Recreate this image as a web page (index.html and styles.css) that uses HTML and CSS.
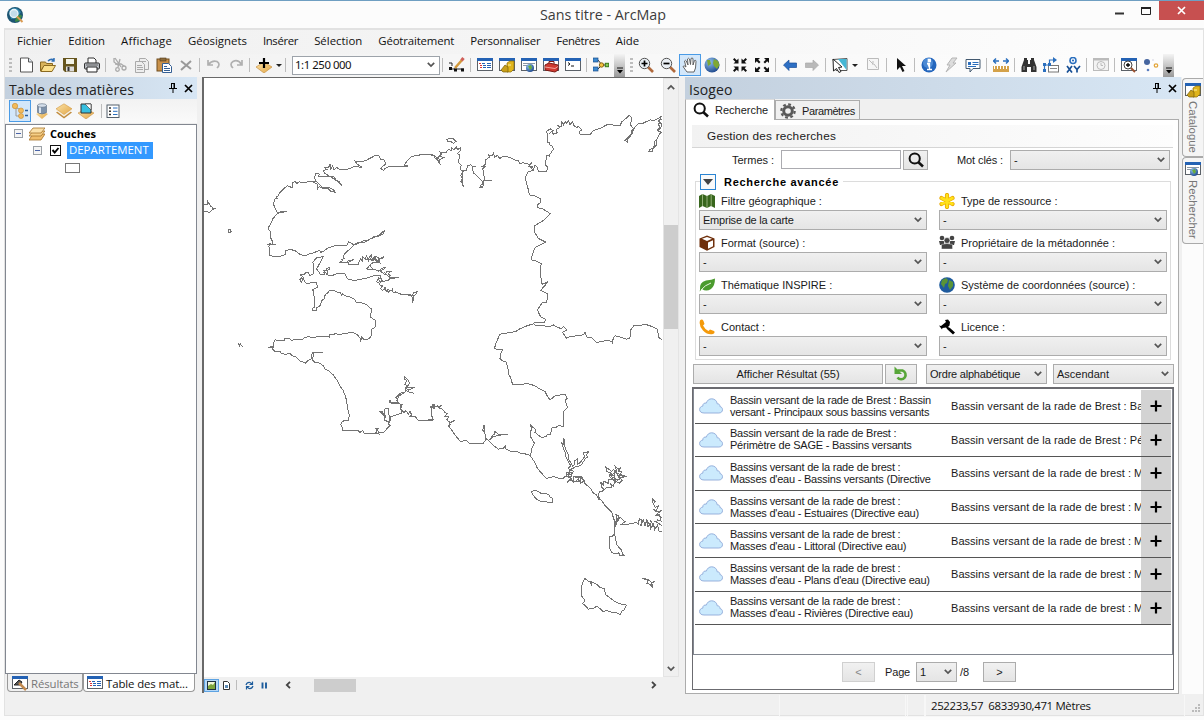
FILE: index.html
```html
<!DOCTYPE html>
<html lang="fr">
<head>
<meta charset="utf-8">
<title>Sans titre - ArcMap</title>
<link rel="stylesheet" href="styles.css">
</head>
<body>
<svg class="defs" width="0" height="0">
  <defs>
    <linearGradient id="gLayer" x1="0" y1="0" x2="1" y2="1"><stop offset="0" stop-color="#fbe3a8"/><stop offset="1" stop-color="#e2a646"/></linearGradient>
    <radialGradient id="gGlobe" cx=".35" cy=".3" r=".8"><stop offset="0" stop-color="#8fc0ee"/><stop offset="1" stop-color="#153f85"/></radialGradient>
  </defs>
  <symbol id="i-win" viewBox="0 0 16 16"><rect x=".5" y="1.5" width="15" height="12" fill="#fff" stroke="#5b6168"/><rect x="0" y="1" width="16" height="3" fill="#2462b4"/></symbol>
  <symbol id="i-toc" viewBox="0 0 16 16"><use href="#i-win"/><path d="M2 6.5h2M3 8.5h2M3 10.5h2" stroke="#d33"/><path d="M5 6.5h3M10 6.5h4M6 8.5h3M10 8.5h4M6 10.5h3M10 10.5h4" stroke="#2462b4"/></symbol>
  <symbol id="i-cat" viewBox="0 0 16 16"><use href="#i-win"/><path d="M8 6l3-2h4v8l-3 3H8z" fill="#e0b51c" stroke="#8a6a06" stroke-width=".7"/><path d="M2 13l4-5 3 2v5H4z" fill="#c9a01a" stroke="#7a5e08" stroke-width=".7"/><path d="M9 8h3" stroke="#fff3a0"/></symbol>
  <symbol id="i-search" viewBox="0 0 16 16"><use href="#i-win"/><path d="M2 6.500h12M2 8.500h5" stroke="#8a97a5"/><circle cx="9" cy="11" r="4" fill="url(#gGlobe)"/><path d="M7 9l3-1 1 3-2 2z" fill="#69ac3c"/></symbol>
  <symbol id="i-plus" viewBox="0 0 14 14"><path d="M7 1.500v11M1.500 7h11" stroke="#000" stroke-width="2.200"/></symbol>
  <symbol id="i-cloud" viewBox="0 0 24 16"><path d="M5 15C2 15 .6 13.400.6 11.500C.6 9.500 2 8.300 3.800 8.100C3.600 5.800 5.500 4.600 7.300 5.100C8.200 2.300 10.200.8 12.700.8C15.800.8 18 3 18.200 5.800C20.100 5.600 21 7 20.900 8.500C22.600 8.900 23.500 10.100 23.500 11.700C23.500 13.700 22 15 19.800 15Z" fill="#cbeafd" stroke="#8fa9d8" stroke-width=".9"/></symbol>
  <symbol id="i-loupe" viewBox="0 0 16 16"><circle cx="6.700" cy="6.500" r="5.100" fill="none" stroke="#111" stroke-width="2"/><path d="M10.400 10.300l4.600 4.200" stroke="#111" stroke-width="2.600"/></symbol>
  <symbol id="i-chev" viewBox="0 0 8 6"><path d="M.8 .8L4 4l3.200-3.200" fill="none" stroke="#555" stroke-width="1.700"/></symbol>
  <symbol id="i-pin" viewBox="0 0 8 10"><path d="M2 .5h4M2.500 0v5.500M5.500 0v5.500M0 5.500h8M4 6v4" stroke="#000" stroke-width="1" fill="none"/><path d="M5 .5v5" stroke="#000"/></symbol>
  <symbol id="i-x" viewBox="0 0 9 9"><path d="M1 1l7 7M8 1l-7 7" stroke="#000" stroke-width="1.700"/></symbol>
  <symbol id="i-layer" viewBox="0 0 16 16"><path d="M8 4.500l8 5-8 6-8-6z" fill="#c08a3c"/><path d="M8 2.800l8 5-8 6-8-6z" fill="#f5efe2"/><path d="M8 .8l8 5-8 5.700-8-5.700z" fill="url(#gLayer)" stroke="#d39a45" stroke-width=".6"/></symbol>
</svg>

<header class="titlebar">
  <svg class="applogo" viewBox="0 0 17 17"><circle cx="8" cy="8" r="8" fill="#1d5572"/><path d="M2 4q4-5 9-2l3 3-4 6-6 1z" fill="#2f86ad"/><path d="M9 10q4-4 6-1l-3 5-4 1z" fill="#3c8b45"/><circle cx="7" cy="6.500" r="4" fill="#c3dce9" stroke="#eaf3f8" stroke-width="1.300"/><path d="M10 9.500l5.500 5.500" stroke="#d99a52" stroke-width="2"/></svg>
  <span class="wintitle">Sans titre - ArcMap</span>
  <span class="winbtns">
    <svg class="wmin" viewBox="0 0 9 3"><path d="M0 1.500h9" stroke="#333" stroke-width="2"/></svg>
    <svg class="wmax" viewBox="0 0 10 8"><path d="M.5 1.500v6h9v-6" fill="none" stroke="#222"/><path d="M0 1h10" stroke="#222" stroke-width="2"/></svg>
    <span class="wclose"><svg viewBox="0 0 9 9"><path d="M1 1l7 7M8 1l-7 7" stroke="#fff" stroke-width="1.700"/></svg></span>
  </span>
</header>

<div class="app">
<nav class="menubar"><span>Fichier</span><span>Edition</span><span>Affichage</span><span>Géosignets</span><span>Insérer</span><span>Sélection</span><span>Géotraitement</span><span>Personnaliser</span><span>Fenêtres</span><span>Aide</span></nav>

<div class="toolbar">
  <i class="grip"></i>
  <b><svg viewBox="0 0 16 16"><path d="M2.500 1h8l4 4v10h-12z" fill="#fff" stroke="#555"/><path d="M10.500 1v4h4" fill="#dfe7ef" stroke="#555"/></svg></b>
  <b><svg viewBox="0 0 16 16"><path d="M.5 5h5l1 1.500h6V9H4L.5 14z" fill="#d9b45c" stroke="#8b6a20"/><path d="M.8 14.500L4 8.500h11.500L12 14.500z" fill="#fbe08c" stroke="#8b6a20"/><path d="M8 4q3-3 6-1v-2M11.500 4h3" fill="none" stroke="#2f6fb5" stroke-width="1.500"/></svg></b>
  <b><svg viewBox="0 0 16 16"><path d="M1 1h14v14H3l-2-2z" fill="#66551e"/><rect x="4" y="2" width="8" height="5" fill="#f2f2e6"/><rect x="4" y="9.500" width="8" height="5" fill="#ddd"/><path d="M6.500 10v4" stroke="#333" stroke-width="2"/></svg></b>
  <b><svg viewBox="0 0 16 16"><path d="M4 6V1h6l2 2v3" fill="#fff" stroke="#333"/><rect x=".6" y="6" width="14.800" height="6" rx="1" fill="#c8ccd2" stroke="#222"/><path d="M3 10h10v5H3z" fill="#fff" stroke="#222"/><path d="M2 8h12" stroke="#555"/></svg></b>
  <i class="sep"></i>
  <b><svg viewBox="0 0 16 16" fill="none" stroke="#aaa" stroke-width="1.300"><path d="M3 1l6 9M8 2L6 10M2 1v4l4 3"/><circle cx="5.500" cy="12.500" r="1.800"/><circle cx="12" cy="11" r="2"/><path d="M3 7h6l3 2"/></svg></b>
  <b><svg viewBox="0 0 16 16" fill="#eee" stroke="#aaa"><path d="M5.500 1.500h6l3 3v8h-9z"/><path d="M1.500 4.500h6l3 3v8h-9z"/><path d="M3 8.500h5M3 10.500h6M3 12.500h6M7 4.500h5"/></svg></b>
  <b><svg viewBox="0 0 16 16"><rect x="1" y="2" width="12" height="12" fill="#c9914a" stroke="#6f4c1e"/><rect x="4" y="1" width="6" height="3" fill="#8b6b3d" stroke="#553b14" stroke-width=".6"/><path d="M6.500 6.500h6l3 3v6h-9z" fill="#fff" stroke="#345f94"/><path d="M8 9.500h3M8 11.500h6M8 13.500h6" stroke="#345f94"/></svg></b>
  <b><svg viewBox="0 0 16 16"><path d="M3 4l10 8M13 4L3 13" stroke="#999" stroke-width="2"/></svg></b>
  <i class="sep"></i>
  <b><svg viewBox="0 0 16 16"><path d="M2 3v5h5M2.500 7.500Q6 3 11 4.500Q15 7 11 11" fill="none" stroke="#b0b0b0" stroke-width="1.700"/></svg></b>
  <b><svg viewBox="0 0 16 16"><path d="M14 3v5H9M13.500 7.500Q10 2 5 4.500Q1 7 5 11" fill="none" stroke="#b0b0b0" stroke-width="1.700"/></svg></b>
  <i class="sep"></i>
  <b><svg viewBox="0 0 16 16"><path d="M8 5l8 5-8 6-8-6z" fill="url(#gLayer)" stroke="#c99243" stroke-width=".7"/><path d="M8 1v10M3 6h10" stroke="#000" stroke-width="2.200"/></svg></b>
  <i class="caret"></i>
  <i class="sep wide"></i>
  <span class="scale">1:1 250 000<svg><use href="#i-chev"/></svg></span>
  <i class="sep"></i>
  <b><svg viewBox="0 0 16 16"><path d="M0 6h3v3M3 12h12" stroke="#222" fill="none"/><path d="M0 10h3v3H0zM5 11.500h3v3H5zM12 11.500h3v3h-3z" fill="#111"/><path d="M6 11l7-8" stroke="#d39a3c" stroke-width="2.500"/><path d="M12.500 3.500l2-2.500" stroke="#d0605a" stroke-width="3"/></svg></b>
  <i class="sep"></i>
  <b><svg><use href="#i-toc"/></svg></b>
  <b><svg><use href="#i-cat"/></svg></b>
  <b><svg><use href="#i-search"/></svg></b>
  <b><svg viewBox="0 0 16 16"><use href="#i-win"/><path d="M2 8l4-2 9 2v5l-3 2-10-2z" fill="#cf3b31" stroke="#7c1a14"/><path d="M6 6V4.500h5V7" fill="none" stroke="#7c1a14"/><path d="M2 10l10 1.500 3-2" stroke="#f3a29b" fill="none"/></svg></b>
  <b><svg viewBox="0 0 16 16"><use href="#i-win"/><path d="M3 5.500l2 1.500-2 1.500M6 9h3" stroke="#111" fill="none"/></svg></b>
  <i class="sep"></i>
  <b><svg viewBox="0 0 16 16"><path d="M5 3l4 5M5 12l4-4h4" stroke="#333" fill="none"/><rect x="0" y="1" width="5" height="4" fill="#3b88cf" stroke="#1b4f8a" stroke-width=".7"/><rect x="0" y="10" width="5" height="4" fill="#3b88cf" stroke="#1b4f8a" stroke-width=".7"/><circle cx="8.500" cy="8" r="2.200" fill="#f3c13e" stroke="#8a6513"/><rect x="12.300" y="6.300" width="3.400" height="3.400" fill="#8cca57" stroke="#3a7a1a"/></svg></b>
  <i class="overflow left"><svg viewBox="0 0 6 7"><path d="M0 1h6" stroke="#111"/><path d="M0 3h6L3 6.500z"/></svg></i>
  <i class="grip second"></i>
  <b><svg viewBox="0 0 16 16"><path d="M10 10l5 5" stroke="#b0693c" stroke-width="2.600"/><circle cx="6.500" cy="6.500" r="5.200" fill="#e9eef3" stroke="#555"/><path d="M6.500 3.500v6M3.500 6.500h6" stroke="#000" stroke-width="1.700"/></svg></b>
  <b><svg viewBox="0 0 16 16"><path d="M10 10l5 5" stroke="#b0693c" stroke-width="2.600"/><circle cx="6.500" cy="6.500" r="5.200" fill="#e9eef3" stroke="#555"/><path d="M3.500 6.500h6" stroke="#000" stroke-width="1.700"/></svg></b>
  <b class="on"><svg viewBox="0 0 16 16"><path d="M5 15L1 9.500q1-1.500 3 .5L2.500 4q.8-1.500 1.800 0l1.700 4L5.500 2q1-1.500 2 0L8.500 7.500 9 1.500q1-1 2 0V8l1.500-4.500q1.500-.8 1.500 1L13.500 11 12 15z" fill="#fff" stroke="#555" stroke-width=".9"/></svg></b>
  <b><svg viewBox="0 0 16 16"><circle cx="8" cy="8" r="7.500" fill="url(#gGlobe)"/><path d="M10 2l4 2 1.500 4-2.500 4-3-3-1-3zM3 3l3 0 1 4-3 2z" fill="#7fa834"/></svg></b>
  <i class="sep"></i>
  <b><svg viewBox="0 0 16 16" fill="#111"><path d="M6.500 1.500v5h-5L3.300 4.700 1 2.400 2.400 1l2.300 2.300zM9.500 1.500v5h5l-1.800-1.800L15 2.400 13.600 1l-2.300 2.300zM6.500 14.500v-5h-5l1.800 1.800L1 13.600 2.400 15l2.300-2.300zM9.500 14.500v-5h5l-1.800 1.800L15 13.600 13.600 15l-2.300-2.300z"/></svg></b>
  <b><svg viewBox="0 0 16 16" fill="#111"><path d="M1 1h5L4.200 2.800 6.500 5 5 6.500 2.800 4.200 1 6zM15 1h-5l1.800 1.800L9.500 5 11 6.500l2.200-2.300L15 6zM1 15h5l-1.800-1.800L6.500 11 5 9.500l-2.200 2.300L1 10zM15 15h-5l1.800-1.800L9.500 11 11 9.500l2.200 2.300L15 10z"/></svg></b>
  <i class="sep"></i>
  <b><svg viewBox="0 0 16 16"><path d="M1.500 8L7 3v3h7.500v4.500H7v3z" fill="#2d6fc4" stroke="#1b4f98" stroke-width=".7"/></svg></b>
  <b><svg viewBox="0 0 16 16"><path d="M14.500 8L9 3v3H1.500v4.500H9v3z" fill="#b9b9b9" stroke="#a9a9a9" stroke-width=".7"/></svg></b>
  <i class="sep"></i>
  <b><svg viewBox="0 0 16 16"><path d="M1 2.500l14-1v12H4z" fill="#fff" stroke="#555"/><path d="M6 2l8.500 0v11z" fill="#46b7d5"/><path d="M1 2l9 8-3.500.5 2.500 4-2 1-2.500-4L1.500 14z" fill="#fff" stroke="#222"/></svg></b>
  <i class="caret"></i>
  <b class="gap"><svg viewBox="0 0 16 16"><path d="M2.500 1.500h11v11h-11z" fill="#f6f6f6" stroke="#bbb"/><path d="M4 3l4 4M8 4v4M9 7l3 4" stroke="#bbb"/></svg></b>
  <i class="sep"></i>
  <b><svg viewBox="0 0 16 16"><path d="M4 1v12l3-3 2.500 5 2-1L9 9h4z" fill="#111"/></svg></b>
  <i class="sep"></i>
  <b><svg viewBox="0 0 16 16"><circle cx="8" cy="8" r="7.500" fill="#2466bd"/><circle cx="7" cy="6" r="5" fill="#4c8ad4"/><path d="M6 6.500h2.500v5.500M6 12.500h5M7.300 2.500h2v2h-2z" stroke="#fff" stroke-width="1.300" fill="#fff"/></svg></b>
  <b><svg viewBox="0 0 16 16"><path d="M9 1h5l-4 5h3L3 15l4-7H4z" fill="#ddd" stroke="#b5b5b5"/></svg></b>
  <b><svg viewBox="0 0 16 16"><path d="M1 2.500h14v9H8l-3 3.500v-3.500H1z" fill="#fff" stroke="#43596f"/><path d="M3 5h3v3H3z" fill="#2b6fbe"/><path d="M7.500 5.500h6M7.500 7.500h6M3 9.500h8" stroke="#2b6fbe"/></svg></b>
  <i class="sep"></i>
  <b><svg viewBox="0 0 16 16"><path d="M0 4h6M10 4h6M3 1.500L.5 4 3 6.500M13 1.500L15.500 4 13 6.500" stroke="#2b6fbe" fill="none" stroke-width="1.500"/><rect x="0" y="9" width="16" height="6" fill="#d4a24a"/><path d="M1.500 9v3M4.500 9v3M7.500 9v3M10.500 9v3M13.500 9v3" stroke="#fff"/></svg></b>
  <i class="sep"></i>
  <b><svg viewBox="0 0 16 16" fill="#333"><path d="M3 1h3v2h1v4h2V3h1V1h3v2l2.500 7v5H10v-5H6v5H.5v-5L3 3z"/><path d="M3 9v4M13 9v4" stroke="#aaa"/></svg></b>
  <b><svg viewBox="0 0 16 16"><path d="M1.500 13V8h5V3h5" stroke="#2b6fbe" fill="none" stroke-width="1.200"/><path d="M10 0l4 3-4 3z" fill="#2b6fbe"/><rect x="5.500" y="8.500" width="10" height="6.500" fill="#fff" stroke="#777"/><path d="M0 12h3v3H0zM0 6h3v3H0zM5 6h3v3H5z" fill="#2b6fbe"/><path d="M7 11.500h7" stroke="#888"/></svg></b>
  <b><svg viewBox="0 0 16 16"><circle cx="8" cy="3.500" r="3" fill="#fff" stroke="#2b6fbe" stroke-width="1.600"/><circle cx="8" cy="3.500" r="1.100" fill="#2b6fbe"/><path d="M2 9l5 6.500M7 9l-5 6.500M9 9l3 3.500 3-3.500M12 12v3.500" stroke="#174f94" fill="none" stroke-width="1.700"/></svg></b>
  <i class="sep"></i>
  <b><svg viewBox="0 0 16 16" fill="#f3f3f3" stroke="#bbb"><rect x=".5" y="1.500" width="15" height="12"/><path d="M0 2.500h16" stroke-width="2"/><circle cx="8" cy="8.500" r="4"/><path d="M8 6v2.500h2"/></svg></b>
  <i class="sep"></i>
  <b><svg viewBox="0 0 16 16"><use href="#i-win"/><circle cx="7" cy="8" r="4" fill="#fff" stroke="#444"/><path d="M7 6v4M5 8h4" stroke="#000" stroke-width="1.300"/><path d="M10 11l4 4" stroke="#9c5230" stroke-width="2"/></svg></b>
  <b><svg viewBox="0 0 16 16"><circle cx="4" cy="5" r="3" fill="#46659f"/><circle cx="13" cy="8.500" r="1.700" fill="#fff" stroke="#e3a63c" stroke-width="1.300"/><circle cx="5" cy="13" r="1.300" fill="#5a7dc0"/><circle cx="10" cy="3" r=".8" fill="#ccd"/></svg></b>
  <i class="overflow"><svg viewBox="0 0 6 7"><path d="M0 1h6" stroke="#111"/><path d="M0 3h6L3 6.500z"/></svg></i>
</div>

<main class="work">
  <section class="toc">
    <div class="phead"><span>Table des matières</span><svg class="pin"><use href="#i-pin"/></svg><svg class="px"><use href="#i-x"/></svg></div>
    <div class="tocbar">
      <b class="on"><svg viewBox="0 0 16 16"><path d="M3 4l6 3M4 4v9h5" stroke="#999" fill="none"/><circle cx="3" cy="3" r="2.700" fill="#f2ba5c" stroke="#c68a2c" stroke-width=".6"/><circle cx="9" cy="7.500" r="2.500" fill="#f2ba5c" stroke="#c68a2c" stroke-width=".6"/><circle cx="9" cy="13" r="2.500" fill="#f2ba5c" stroke="#c68a2c" stroke-width=".6"/><path d="M13 7.500h3M13 12.500h3" stroke="#2b5f9e" stroke-width="1.500"/></svg></b>
      <b><svg viewBox="0 0 16 16"><path d="M8 8l6 3-6 5-6-5z" fill="url(#gLayer)"/><path d="M3.500 2.500v7q4.500 3 9 0v-7z" fill="#7e92ab" stroke="#5b6b80" stroke-width=".6"/><path d="M6 3v7" stroke="#dbe5f0" stroke-width="2"/><ellipse cx="8" cy="2.500" rx="4.500" ry="1.800" fill="#d5dfeb" stroke="#5b6b80" stroke-width=".6"/></svg></b>
      <b><svg><use href="#i-layer"/></svg></b>
      <b><svg viewBox="0 0 16 16"><path d="M8 6l8 4-8 6-8-6z" fill="url(#gLayer)" stroke="#c99243" stroke-width=".6"/><path d="M3 1h10v9H3z" fill="#37bfe0" stroke="#333"/><path d="M7 1h6v6z" fill="#fff" stroke="#333" stroke-width=".6"/></svg></b>
      <i class="sep"></i>
      <b><svg viewBox="0 0 16 16"><rect x="2" y="2" width="12" height="12.500" fill="#fff" stroke="#55606c"/><path d="M4 5h2M4 8.300h2M4 11.500h2" stroke="#333" stroke-width="1.600"/><path d="M8 5h4.500M8 8.300h4.500M8 11.500h4.500" stroke="#2b6fbe"/></svg></b>
    </div>
    <div class="tree">
      <div class="node l1"><i class="exp"></i><svg viewBox="0 0 16 14"><path d="M4 7h12l-4 6H0z" fill="#efbd6b" stroke="#a7742b" stroke-width=".8"/><path d="M4 4h12l-4 5H0z" fill="#f6cf86" stroke="#a7742b" stroke-width=".8"/><path d="M4 1h12l-4 5H0z" fill="#fbe1a9" stroke="#a7742b" stroke-width=".8"/></svg><strong>Couches</strong></div>
      <div class="node l2"><i class="exp"></i><svg viewBox="0 0 11 11"><rect x=".5" y=".5" width="10" height="10" fill="#fff" stroke="#111"/><path d="M2.500 5l2.200 2.500L8.500 3" fill="none" stroke="#000" stroke-width="1.900"/></svg><span class="sel">DEPARTEMENT</span></div>
      <div class="swatch"></div>
    </div>
    <div class="doctabs">
      <span class="dtab"><svg viewBox="0 0 16 16"><use href="#i-win"/><path d="M2 10l5-5 3 2-2 3z" fill="#555" stroke="#222"/><path d="M7 8l7 7" stroke="#c28a50" stroke-width="2.500"/></svg><em>Résultats</em></span><span class="dtab act"><svg><use href="#i-toc"/></svg><em>Table des mat...</em></span>
    </div>
  </section>

  <section class="mapwin">
    <div class="maparea">
      <svg class="map" viewBox="204 79 459 599" shape-rendering="crispEdges">
        <g transform="translate(200 110) scale(.33333)">
          <path d="M720 160L712 152 715 146 705 148 700 138 672 135 650 140 635 142 622 155 612 168 625 171 600 172 570 171 555 178 551 185 542 178 548 172 558 165 552 152 541 150 538 141 525 140 500 153 488 157 465 156 470 164 487 176 465 171 455 176 440 182 418 181 410 175 402 182 398 170 392 180 390 165 386 175 374 176 381 182 370 184 374 193 395 205 400 202 410 215 426 230 418 218 405 213 392 202 370 203 355 202 358 195 348 192 344 203 346 215 340 220 352 226 352 240 358 232 370 240 385 240 393 247 406 250 400 242 388 236 366 234 350 218 330 216 312 222 303 220 298 218 290 224 285 216 278 222 276 236 262 230 250 240 238 252 234 262 228 262 232 268 225 270 220 285 226 298 232 310 260 307 232 313 218 330 212 345 204 357 213 372 211 385 219 400 215 408 228 408 200 408 211 403 207 412 208 440 222 442 245 441 257 436 257 425 270 421 285 425 300 436 315 441 330 434 340 432 358 424 362 430 370 427 385 416 410 409 430 410 440 409 446 398 462 408 475 400 490 402 510 390 525 384 540 376 556 362 548 376 535 382 520 384 505 394 490 396 470 405 462 408 450 420 440 428 430 440 432 448 426 452 428 455 418 461 440 462 444 456 448 454 462 452 449 458 445 460 446 466 475 467 478 455 482 450 487 456 488 444 495 450 500 440 505 455 508 445 515 437 512 452 520 455 528 443 540 449 553 443 545 450 535 448 535 455 540 462 520 460 508 470 505 475 500 480 512 482 525 482 535 487 545 478 558 475 550 482 540 485 555 497 560 488 577 487 568 490 565 495 570 500 568 507 598 506 570 508 565 514 555 516 540 517 535 510 530 518 538 522 540 528 548 530 542 538 548 545 555 535 558 545 565 550 563 542 575 546 577 540 580 552 592 551 605 557 618 555 635 562 640 552 652 548 648 556 642 560 642 570 637 582 638 565"/>
          <path d="M495 452h20l8-8 6 14 10-10-3 12M515 460h22l-8-8M510 470l10 12M552 490l14 12M535 505l12 8-10 14M550 540l20 8M585 548l25 10M625 556l20 5"/>
          <path d="M545 517L542 500 525 499 500 507 463 515 443 510 435 495 412 494 395 500 380 497 384 488 378 480 388 475 390 482 372 485 378 492 370 490 375 495 362 497 350 480 358 465 370 443 350 446 338 460 342 470 340 495 330 500 326 492 318 490 312 498 300 497 308 502 300 512 304 520 310 506 314 518 320 523 350 520 352 535 335 543 342 546 342 560 343 595 337 598 339 605 350 603 350 596 360 590 365 575 372 570 376 556 385 552 383 550 390 544 400 543 410 549 420 550 425 560 427 554 435 560 450 564 465 572 470 582 485 582 500 587 514 600 512 625 526 634 525 655 516 660 516 672 512 685 500 693 490 690 485 685 482 698 480 688 477 683 470 676 458 670 425 675 418 678 405 673 400 678 388 678 388 684 370 682 355 682 340 687 325 683 312 686 310 690 285 691 275 695 270 690 255 688 252 696 240 696 225 692 220 705 222 714 204 716 218 712 218 720 225 728 240 728 245 734 258 736 270 733 276 740 290 745 300 756 316 762 324 754 334 750 334 742 337 730 350 730 370 730 340 732 340 740 337 752 345 760 358 762 370 770 375 780 385 785 400 798 412 815 418 828 430 845 436 862 440 875 442 895 448 920 445 935 432 935 425 940 422 947 427 957 427 964 475 965 480 970 488 964 492 973 535 975 528 970 532 962 528 958 535 958 533 965 538 972 552 970 560 960 570 950 565 945 572 930 566 915 566 900 556 898 552 912 558 925 550 918 548 908 540 907 552 920 555 935 568 938 570 925 575 922 605 912 606 905 600 895 608 886 590 884 575 884 570 874 568 880 575 882 592 880 592 870 588 866 600 853 612 850 618 848 615 838 624 830 614 826 620 815 614 810 614 803 626 815 628 822 622 835 628 835 640 836 630 842 622 840 628 850 643 853 630 850 620 845 605 856 598 860 590 875 600 884 605 893 600 900 612 910 618 905 625 915 630 906 635 918 630 922 645 922 655 934 698 934 696 925 696 900 691 892 700 894 705 884 703 895 712 890 720 894"/>
          <path d="M12 288L24 286 24 278 32 292 36 294 37 297 47 298 35 304 28 310 12 307M85 362h6l3 5-5 5-4-2zM114 702l4 8 2-6 10 11"/>
        </g>
        <g transform="translate(420 78) scale(.33333 .35714)">
          <path d="M0 217L20 216 42 220 50 226 55 228 50 232 60 242 58 232 72 226 58 222 64 216 60 210 78 212 84 204 95 205 94 198 102 203 110 196 112 204 122 198 122 205 112 214 118 218 116 240 124 248 120 258 130 265 122 275 128 285 122 292 128 298 131 309 126 300 128 280 126 262 138 262 144 248 152 246 158 252 168 250 157 252 160 268 172 278 185 290 190 300 182 303 186 309 176 309 190 305 192 290 216 291 193 289 191 262 187 258 196 250 188 250 196 245 196 232 208 225 206 218 216 220 220 214 224 224 232 220 240 228 250 222 270 225 284 232 295 235 300 242 310 240 328 245 335 240 326 252 338 252 340 258 345 248 352 252 355 264 380 264 384 252 377 248 379 220 390 222 390 216 400 203 398 194 390 190 390 183 382 183 382 160 380 152 390 145 400 150 388 158 395 152 400 160 412 156 408 148 418 142 412 135 425 140 425 126 430 134 436 124 440 130 445 122 450 134 458 124 460 134 470 142 476 138 485 148 478 153 480 160 512 160 520 150 540 144 560 134 575 132 584 137 600 136 606 125 618 116 627 108 634 112 634 125 630 132 640 145 634 152 636 158 628 165 622 172 615 178 622 182 624 174 632 165 640 150 645 140 655 130 668 130 690 120 700 122 715 116 727 108M727 118L715 122 720 128 714 132 720 140 712 150 727 155M722 110l-4 14 8 10-8 14M722 155L715 165 708 180 710 190 700 200 690 202 686 208 696 210 700 195 705 192 705 180 712 172"/>
          <path d="M80 175L88 172 100 173 108 180 100 186 95 182 84 182z"/>
          <path d="M330 250L340 262 325 265 316 280 320 300 326 318 328 330 345 333 360 340 363 350 352 358 354 366 370 370 391 383 375 398 366 404 345 416 344 435 355 452 368 458 377 462 360 470 345 478 340 490 333 512 345 514 364 522 360 545 366 580 374 578 384 573 376 583 362 597 384 608 380 630 366 633 352 652 362 672 376 678 374 688 345 686 340 691 320 697 300 705 288 712 275 715 252 718 240 720 228 745 223 761 248 764 242 775 240 788 248 795 258 797 265 820 265 830 272 842 278 862 310 862 312 859 335 860 340 864 350 866 355 872 375 880 382 894 390 904 405 893 435 888 442 900 435 904 442 925 438 930 430 938 430 978 415 976 410 980 396 982 392 1000 382 1000 380 1006 365 1010 354 1002 345 995 348 988 338 980 332 975 336 990 333 990 332 1008 343 1025 335 1040 332 1060"/>
          <path d="M340 691L350 697 370 697 390 698 400 694 410 700 425 705 430 698 440 708 428 715 440 732 450 726 470 725 490 722 495 715 500 728 515 730 530 743 560 738 575 740 577 746 580 730 586 725 600 728 618 734 628 732 632 724 632 708 642 696 660 697 672 692 685 695 700 700 712 706 716 728 727 738"/>
          <path d="M0 961L40 960 34 945 33 925 44 928 38 918 42 915 45 922 58 924 66 918 56 926 68 930 75 940 82 942 75 950 86 952 80 960 92 968 105 961 88 968 90 973 86 977 102 998 120 1020 140 1018 150 1027 190 1025 196 1018 195 1000 188 988 192 975 194 995 198 1012 205 1018 213 1012 220 1000 225 1003 225 993 240 1004 250 1000 265 1000 240 1002 220 1008 205 1018 218 1030 235 1042 250 1040 258 1032 258 1042 265 1045 276 1050 290 1048 300 1053 325 1057 332 1062 345 1080 350 1092 360 1105 380 1124 400 1119 415 1123 430 1123 440 1115 450 1105 446 1095 452 1088 445 1078 438 1065 435 1050 430 1040 425 1025 432 1030 432 1012 434 1035 446 1060 446 1070 458 1090 465 1085 462 1075 472 1070 472 1085 480 1080 495 1062 489 1056 493 1050 500 1052 508 1046 500 1058 502 1064 495 1070 485 1085 475 1090 465 1092 460 1095 450 1100 460 1104 455 1115 445 1110 445 1120 455 1124 442 1135 448 1126 460 1134 460 1120 485 1120 497 1140 490 1132 482 1138 475 1126 466 1132 452 1128M478 1118L492 1130 497 1140 512 1152 520 1165 530 1170 535 1182 545 1185 555 1200 575 1218 582 1240 584 1275 578 1286 568 1286 570 1305 568 1318 576 1332 590 1335 596 1332 600 1340 616 1340 608 1336 605 1325 590 1310 585 1285 584 1262 590 1250 588 1225 596 1228 592 1245 600 1232 615 1245 605 1252 625 1252 650 1247 655 1252 658 1237 665 1240 662 1258 670 1240 675 1256 680 1242 684 1260 690 1248 692 1265 700 1252 704 1268 712 1255 718 1273 727 1273M440 1108h14v12h-14zM446 1118l10 12M465 1122h18v10h-22M580 1235l8 15-6 22"/>
          <path d="M540 1180L534 1176 538 1160 545 1162 552 1155 545 1148 542 1135 550 1142 552 1132 565 1138 565 1128 575 1125 568 1118 575 1110 560 1105 558 1093 566 1098 575 1105 580 1100 590 1104 585 1090 595 1098 603 1092 595 1105 606 1104 600 1115 620 1118 600 1122 606 1130 598 1138 585 1130 580 1145 572 1140 575 1150 560 1150 552 1155M575 1115l10-10 14 8-2 14-12 8-8-12zM568 1112l16 6M590 1108l8 16M576 1120l18 10M600 1108l12 14M584 1110v25M570 1128h30"/>
          <path d="M696 1180L706 1190 700 1195 705 1205 716 1200 708 1215 718 1218 725 1212 710 1225 722 1232 722 1240 705 1245 716 1250 727 1258M700 1210l10 8M704 1230l12-6 8 10M712 1240l14 4M690 1240l14 22M680 1238l10 20M700 1182l-4 10"/>
          <path d="M333 1160L350 1158 362 1165 385 1168 390 1176 398 1180 396 1192 388 1192 375 1188 365 1190 350 1182 340 1172zM495 1404L505 1412 515 1412 515 1426 510 1412 530 1420 540 1430 552 1432 558 1450 575 1462 590 1472 600 1475 620 1479 612 1492 605 1496 600 1506 590 1500 580 1500 560 1494 550 1497 540 1488 530 1482 520 1488 505 1490 496 1480 488 1475 495 1465 486 1455 486 1440 484 1430 488 1415zM668 1403L676 1407 685 1410 680 1418 690 1420 699 1430 695 1418 706 1412 695 1415 685 1408z"/>
        </g>
      </svg>
      <div class="vscroll"><svg class="up" viewBox="0 0 8 6"><path d="M.8 5.200L4 2l3.200 3.200" fill="none" stroke="#555" stroke-width="1.700"/></svg><div class="vthumb"></div><svg class="down"><use href="#i-chev"/></svg></div>
    </div>
    <div class="mapbar">
      <span class="mb on"><svg viewBox="0 0 9 9"><rect x=".5" y=".5" width="8" height="8" fill="#f2f6d8" stroke="#1d3040"/><path d="M1 5l3-2 2 1 2-3v7H1z" fill="#7da53b"/></svg></span>
      <span class="mb"><svg viewBox="0 0 9 9"><path d="M1.500.5h4l2 2v6h-6z" fill="#fff" stroke="#333"/><path d="M3 4h3v3H3z" fill="#5d8ab3"/></svg></span>
      <i class="sep"></i>
      <span class="mb"><svg viewBox="0 0 9 9"><path d="M1 4Q2 1 5 1.500L7 3M8 5Q7 8 4 7.500L2 6M7.500.5v3h-3M1.500 8.500v-3h3" fill="none" stroke="#1d5c9c" stroke-width="1.200"/></svg></span>
      <span class="mb"><svg viewBox="0 0 9 9"><path d="M2.500 1.500v6M6 1.500v6" stroke="#1d5c9c" stroke-width="1.900"/></svg></span>
      <svg class="lt" viewBox="0 0 6 8"><path d="M5 .8L1.800 4 5 7.200" fill="none" stroke="#444" stroke-width="1.800"/></svg>
      <div class="hthumb"></div>
      <svg class="rt" viewBox="0 0 6 8"><path d="M1 .8L4.200 4 1 7.200" fill="none" stroke="#444" stroke-width="1.800"/></svg>
    </div>
  </section>

  <section class="isogeo">
    <div class="phead"><span class="iso">Isogeo</span><svg class="pin"><use href="#i-pin"/></svg><svg class="px"><use href="#i-x"/></svg></div>
    <div class="tabs">
      <span class="tab act"><svg><use href="#i-loupe"/></svg><em>Recherche</em></span>
      <span class="tab"><svg viewBox="0 0 16 16"><circle cx="8" cy="8" r="4.300" fill="none" stroke="#595959" stroke-width="3"/><circle cx="8" cy="8" r="6.700" fill="none" stroke="#595959" stroke-width="2.200" stroke-dasharray="2.800 2.460"/></svg><em class="tight4">Paramètres</em></span>
    </div>
    <div class="panel">
      <h2>Gestion des recherches</h2>
      <div class="terms">
        <label class="lt1">Termes :</label><input type="text"><button class="go"><svg><use href="#i-loupe"/></svg></button>
        <label class="lt2">Mot clés :</label><span class="combo kw">-<svg><use href="#i-chev"/></svg></span>
      </div>
      <div class="group">
        <div class="legend"><button><svg viewBox="0 0 10 6"><path d="M0 0h10L5 6z" fill="#444"/></svg></button><strong>Recherche avancée</strong></div>
        <div class="filters">
          <div class="f"><label><svg viewBox="0 0 16 16"><path d="M0 3l3.500-2 4.500 2 4-2 4 2v12l-4-2-4 2-4.500-2L0 15z" fill="#38661d"/><path d="M3.500 1v12M8 3v12M12.200 1v12" stroke="#a9c38f" stroke-width=".8"/></svg>Filtre géographique :</label><span class="combo tight2">Emprise de la carte<svg><use href="#i-chev"/></svg></span></div>
          <div class="f"><label><svg viewBox="0 0 16 16"><path d="M8 2v12M2.500 5l11 6M13.500 5l-11 6" stroke="#e9a800" stroke-width="4.200" stroke-linecap="round"/><path d="M8 2v12M2.500 5l11 6M13.500 5l-11 6" stroke="#ffe11a" stroke-width="2.600" stroke-linecap="round"/></svg>Type de ressource :</label><span class="combo">-<svg><use href="#i-chev"/></svg></span></div>
          <div class="f"><label><svg viewBox="0 0 16 16"><path d="M8 .5l7.500 3v8.500L8 15.700.5 12V3.500z" fill="#6e2e0a"/><path d="M3 3.800L8 2l5 1.800L8 6z" fill="#fff"/><path d="M9 7.500l5-2.200v6L9 13.700z" fill="#fff"/></svg>Format (source) :</label><span class="combo">-<svg><use href="#i-chev"/></svg></span></div>
          <div class="f"><label><svg viewBox="0 0 16 16" fill="#444"><circle cx="3" cy="3" r="2.300"/><circle cx="13" cy="3" r="2.300"/><path d="M0 6h5v4H1zM11 6h5l-1 4h-4z"/><circle cx="8" cy="5.500" r="3" stroke="#fff" stroke-width=".6"/><path d="M2.500 9.500q5.500-2 11 0V14h-11z" stroke="#fff" stroke-width=".4"/></svg>Propriétaire de la métadonnée :</label><span class="combo">-<svg><use href="#i-chev"/></svg></span></div>
          <div class="f"><label><svg viewBox="0 0 16 16"><path d="M1 13Q0 5 7 3.500 13 3 16 1.500 16 9 12 12 7 15 3 12L.5 14.500z" fill="#4b9b2e"/><path d="M2 13Q6 8 12 6" stroke="#e7f3df" fill="none"/></svg>Thématique INSPIRE :</label><span class="combo">-<svg><use href="#i-chev"/></svg></span></div>
          <div class="f"><label><svg viewBox="0 0 16 16"><circle cx="8" cy="8" r="7.800" fill="#1e5a9d"/><path d="M3 3l4-2 2 2-1 3-2 1-1 4-3-4zM10 3l4 2 0 4-3 4-2-4z" fill="#5a9436"/></svg>Système de coordonnées (source) :</label><span class="combo">-<svg><use href="#i-chev"/></svg></span></div>
          <div class="f"><label><svg viewBox="0 0 16 16"><path d="M1 1.500Q3-.5 4.500 2L5.500 5 4 6.500Q6 10.500 9.500 12L11 10.500 15 12Q16.500 13.500 14 15 9 16.500 4 11.500-.5 6.500 1 1.500z" fill="#f49a0b"/></svg>Contact :</label><span class="combo">-<svg><use href="#i-chev"/></svg></span></div>
          <div class="f"><label><svg viewBox="0 0 16 16"><path d="M0 6.500L2 7 7 3 6 1 9 0.500 11 3 10.500 6.500 9 8l2 1 5 4.500-2 2-5.500-5L7 8.500 3.500 9 3 10.500z" fill="#000"/></svg>Licence :</label><span class="combo">-<svg><use href="#i-chev"/></svg></span></div>
        </div>
      </div>
      <div class="actions">
        <button class="show">Afficher Résultat (55)</button>
        <button class="reset"><svg viewBox="0 0 16 16"><path d="M4 4.500h5a4.500 4.500 0 1 1-5 7" fill="none" stroke="#57a639" stroke-width="2.600"/><path d="M1 .5v7.500h7.500z" fill="#57a639"/></svg></button>
        <span class="combo ord tight2">Ordre alphabétique<svg><use href="#i-chev"/></svg></span>
        <span class="combo asc">Ascendant<svg><use href="#i-chev"/></svg></span>
      </div>
      <div class="results">
        <div class="list">
          <div class="row"><svg class="cloud"><use href="#i-cloud"/></svg><p>Bassin versant de la rade de Brest : Bassin<br>versant - Principaux sous bassins versants</p><span>Bassin versant de la rade de Brest : Ba</span><b><svg><use href="#i-plus"/></svg></b></div>
          <div class="row"><svg class="cloud"><use href="#i-cloud"/></svg><p>Bassin versant de la rade de Brest :<br>Périmètre de SAGE - Bassins versants</p><span>Bassin versant de la rade de Brest : Pé</span><b><svg><use href="#i-plus"/></svg></b></div>
          <div class="row"><svg class="cloud"><use href="#i-cloud"/></svg><p>Bassins versant de la rade de brest :<br>Masses d'eau - Bassins versants (Directive</p><span>Bassins versant de la rade de brest : M</span><b><svg><use href="#i-plus"/></svg></b></div>
          <div class="row"><svg class="cloud"><use href="#i-cloud"/></svg><p>Bassins versant de la rade de brest :<br>Masses d'eau - Estuaires (Directive eau)</p><span>Bassins versant de la rade de brest : M</span><b><svg><use href="#i-plus"/></svg></b></div>
          <div class="row"><svg class="cloud"><use href="#i-cloud"/></svg><p>Bassins versant de la rade de brest :<br>Masses d'eau - Littoral (Directive eau)</p><span>Bassins versant de la rade de brest : M</span><b><svg><use href="#i-plus"/></svg></b></div>
          <div class="row"><svg class="cloud"><use href="#i-cloud"/></svg><p>Bassins versant de la rade de brest :<br>Masses d'eau - Plans d'eau (Directive eau)</p><span>Bassins versant de la rade de brest : M</span><b><svg><use href="#i-plus"/></svg></b></div>
          <div class="row"><svg class="cloud"><use href="#i-cloud"/></svg><p>Bassins versant de la rade de brest :<br>Masses d'eau - Rivières (Directive eau)</p><span>Bassins versant de la rade de brest : M</span><b><svg><use href="#i-plus"/></svg></b></div>
        </div>
        <div class="pager"><button class="prev">&lt;</button><span class="pg">Page</span><span class="combo num">1<svg><use href="#i-chev"/></svg></span><span class="tot">/8</span><button class="next">&gt;</button></div>
      </div>
    </div>
  </section>

  <aside class="dock">
    <div class="vtab v1"><svg><use href="#i-cat"/></svg><span>Catalogue</span></div>
    <div class="vtab v2"><svg><use href="#i-search"/></svg><span>Rechercher</span></div>
  </aside>
</main>
<footer class="status"><span class="cell c1"></span><span class="cell c2"></span><span class="cell c3">252233,57&nbsp; 6833930,471 Mètres</span><svg viewBox="0 0 9 9" fill="#bbb"><path d="M6 0h2v2H6zM3 3h2v2H3zM6 3h2v2H6zM0 6h2v2H0zM3 6h2v2H3zM6 6h2v2H6z"/></svg></footer>
</div>
</body>
</html>
```
FILE: styles.css
```css
* { box-sizing: border-box; }
body { margin: 0; width: 1204px; height: 720px; overflow: hidden; background: #fcfcfc; border-top: 1px solid #6f9fc2; font: 11px "Liberation Sans", sans-serif; color: #1a1a1a; }
svg { display: block; flex: none; }
em, i { font-style: normal; }
.defs { height: 0; }
button { font: inherit; color: inherit; padding: 0; margin: 0; border: 1px solid #acacac; background: linear-gradient(#f1f1f1, #e4e4e4); display: flex; align-items: center; justify-content: center; }

.titlebar { height: 27px; display: flex; position: relative; justify-content: center; }
.applogo { position: absolute; left: 7px; top: 6px; width: 17px; height: 17px; }
.wintitle { font: 14.3px/28px "Open Sans", sans-serif; color: #3c3c3c; white-space: nowrap; width: 127px; margin-left: 3px; }
.winbtns { position: absolute; right: 0; top: 0; display: flex; }
.wmin { width: 9px; height: 3px; margin: 11px 17px 0 0; }
.wmax { width: 10px; height: 8px; margin: 6px 8px 0 0; }
.wclose { width: 45px; height: 19px; background: #c75050; display: flex; align-items: center; justify-content: center; }
.wclose svg { width: 9px; height: 9px; }

.app { margin: 0 0 0 4px; height: 688px; border: 1px solid #e2e2e2; border-top-width: 2px; background: #f0f0f0; display: flex; flex-direction: column; }
.menubar { height: 24px; display: flex; gap: 16px; padding: 0 12px; font: 11.4px/22px "Open Sans", sans-serif; color: #111; background: linear-gradient(90deg, #f0f0f0 0%, #f5f5f5 45%, #fcfcfc 90%); white-space: nowrap; flex: none; }
.menubar span:nth-child(3) { letter-spacing: .2px; }
.menubar span:nth-child(5) { letter-spacing: -.35px; }
.menubar span:nth-child(7) { letter-spacing: -.15px; }
.menubar span:nth-child(8) { letter-spacing: -.2px; }
.menubar span:nth-child(9) { letter-spacing: -.35px; }
.toolbar { height: 23px; flex: none; display: flex; align-items: center; padding: 0 0 1px 4px; background: linear-gradient(90deg, #f1f1f1 0%, #f7f7f7 45%, #fcfcfc 90%); }
.toolbar b, .tocbar b { width: 22px; height: 22px; flex: none; display: flex; align-items: center; justify-content: center; }
.toolbar b svg, .tocbar b svg { width: 16px; height: 16px; }
.toolbar b.on, .tocbar b.on { background: #d3e7fa; border: 1px solid #4a9be6; }
.toolbar b.gap { margin-left: 3px; }
.grip { width: 3px; height: 14px; margin-right: 3px; background: repeating-linear-gradient(#bdbdbd 0 2px, transparent 2px 4px); }
.grip.second { margin: 0 2px 0 5px; }
.sep { width: 6px; height: 14px; flex: none; background: linear-gradient(#bcbcbc, #bcbcbc) 2px 0 / 1px 100% no-repeat; }
.sep.wide { width: 9px; }
.caret { border: 3px solid transparent; border-top-color: #222; border-bottom: 0; width: 6px; height: 3px; margin: 0 1px; }
.scale { width: 148px; height: 19px; background: #fff; border: 1px solid #9da3aa; font: 11.4px/16px "Noto Sans", sans-serif; letter-spacing: -.45px; color: #111; padding: 0 4px 0 2px; display: flex; justify-content: space-between; align-items: center; }
.scale svg, .combo svg { width: 8px; height: 6px; }
.overflow { width: 11px; height: 23px; background: linear-gradient(#f4f4f4, #999); display: flex; align-items: flex-end; justify-content: center; padding-bottom: 3px; margin-left: 1px; }
.overflow.left { margin-left: 2px; }
.overflow svg { width: 6px; height: 7px; }

.work { flex: none; height: 618px; display: flex; }
.phead { height: 22px; flex: none; display: flex; align-items: center; padding: 2px 4px 0; background: linear-gradient(90deg, #c3d0de, #d7e6f4); font: 14px "Open Sans", sans-serif; letter-spacing: .1px; color: #222; white-space: nowrap; }
.phead span { flex: 1; }
.pin { width: 8px; height: 10px; margin: 0 7px 2px 0; }
.px { width: 9px; height: 9px; margin-bottom: 2px; }

.toc { width: 192px; display: flex; flex-direction: column; }
.tocbar { height: 25px; display: flex; align-items: center; padding-left: 4px; background: linear-gradient(#f2f2f2, #fafafa); border-bottom: 1px solid #eee; }
.tocbar .sep { margin-left: 2px; }
.tocbar .sep + b { margin-left: -3px; }
.tree { height: 550px; flex: none; background: #fff; border: 1px solid #828790; font: 11.4px "Open Sans", sans-serif; }
.node { display: flex; align-items: center; height: 17px; }
.exp { width: 9px; height: 9px; border: 1px solid #9aa0a6; background: linear-gradient(#4a64a8, #4a64a8) 1px 3px / 5px 1px no-repeat, #f4f4f4; }
.l1 { padding: 0 0 0 8px; height: 17px; }
.l1 svg { width: 16px; height: 14px; margin: 0 5px 0 6px; }
.l1 strong { font-size: 11px; color: #000; }
.l2 { padding-left: 27px; }
.l2 svg { width: 11px; height: 11px; margin: 0 6px 0 8px; }
.sel { background: #3399ff; color: #fff; line-height: 16px; height: 17px; width: 86px; padding-left: 2px; letter-spacing: 0; }
.swatch { width: 15px; height: 10px; border: 1px solid #777; margin: 4px 0 0 59px; }
.doctabs { display: flex; padding-left: 2px; height: 18px; font: 11.4px/17px "Open Sans", sans-serif; }
.dtab { display: flex; align-items: center; width: 76px; height: 18px; border: 1px solid #999; border-top: 0; border-radius: 0 0 4px 4px; padding: 1px 0 0 4px; color: #777; white-space: nowrap; letter-spacing: -.1px; }
.dtab svg { width: 16px; height: 16px; margin-right: 3px; }
.dtab.act { background: #fff; color: #111; width: 112px; padding-left: 3px; }

.mapwin { margin-left: 5px; width: 477px; display: flex; flex-direction: column; }
.maparea { display: flex; height: 600px; border: solid #696969; border-width: 1px 0 0 2px; }
.map { width: 459px; height: 599px; background: #fff; fill: none; stroke: #737373; stroke-width: 1; }
.map path { vector-effect: non-scaling-stroke; }
.vscroll { width: 16px; border: 1px solid #e4e4e4; background: #f0f0f0; display: flex; flex-direction: column; align-items: center; justify-content: space-between; padding: 5px 0 4px; }
.vscroll .up, .vscroll .down { width: 8px; height: 6px; }
.vthumb { width: 14px; height: 104px; background: #cdcdcd; margin-bottom: 203px; }
.mapbar { display: flex; align-items: center; height: 16px; border-left: 2px solid #696969; background: #f0f0f0; }
.mb { width: 15px; height: 13px; display: flex; align-items: center; justify-content: center; flex: none; border: 1px solid transparent; }
.mb.on { background: #b5d8f8; border-color: #5ea3e2; }
.mb svg { width: 9px; height: 9px; }
.mapbar .sep { height: 10px; margin: 0; }
.mapbar .sep + .mb { margin-left: 2px; }
.lt, .rt { width: 6px; height: 8px; }
.lt { margin-left: 13px; margin-right: 23px; }
.hthumb { width: 42px; height: 13px; background: #cdcdcd; }
.rt { margin-left: 295px; }

.isogeo { margin-left: 6px; width: 496px; display: flex; flex-direction: column; }
.tabs { display: flex; height: 20px; align-items: flex-end; }
.tab { display: flex; align-items: center; height: 19px; border: 1px solid #acacac; border-bottom: 0; padding: 1px 0 0 4px; width: 85px; }
.tab svg { width: 16px; height: 16px; margin-right: 6px; }
.tab.act { width: 90px; height: 21px; background: #fff; padding: 0 0 1px 7px; margin-bottom: -1px; z-index: 1; border-top-color: #ddd; }
.tight4 { letter-spacing: -.4px; }
.tight2 { letter-spacing: -.22px; }
.panel { width: 494px; height: 575px; border: 1px solid #acacac; background: #fff; padding: 5px 5px 0 6px; flex: none; }
h2 { margin: 0; height: 23px; font: 11.8px/22px "Liberation Sans", sans-serif; letter-spacing: .2px; padding-left: 15px; border-bottom: 1px solid #d5d5d5; background: linear-gradient(90deg, #f2f2f2, #fdfdfd); }
.terms { display: flex; align-items: center; height: 23px; }
.lt1 { margin-left: 40px; width: 49px; }
.terms input { width: 120px; height: 19px; border: 1px solid #ababb0; padding: 0; }
.go { width: 25px; height: 20px; margin-left: 2px; }
.terms .go svg { width: 16px; height: 16px; }
.lt2 { margin-left: 29px; width: 53px; letter-spacing: -.1px; }
.combo { display: flex; justify-content: space-between; align-items: center; height: 20px; border: 1px solid #acacac; background: linear-gradient(#f0f0f0, #e5e5e5); padding: 0 4px 0 3px; white-space: nowrap; }
.kw { width: 160px; }
.group { margin: 10px 2px 0 3px; height: 179px; border: 1px solid #dcdcdc; }
.legend { display: flex; align-items: center; margin: -9px 0 0 4px; width: 143px; background: #fff; height: 17px; }
.legend button { width: 16px; height: 16px; border-color: #2a84d2; background: #fafafa; }
.legend button svg { width: 10px; height: 6px; }
.legend strong { margin-left: 8px; letter-spacing: .72px; color: #000; white-space: nowrap; }
.filters { display: grid; grid-template-columns: 228px 228px; column-gap: 12px; padding-left: 3px; margin-top: 2px; }
.f { height: 42px; }
.f label { display: flex; align-items: center; height: 18px; white-space: nowrap; }
.f label svg { width: 16px; height: 16px; margin-right: 6px; }
.actions { display: flex; height: 20px; margin: 4px -3px 0 1px; }
.show { width: 190px; }
.reset { width: 32px; margin: 0 9px 0 2px; }
.reset svg { width: 17px; height: 16px; }
.ord { width: 121px; margin-right: 6px; }
.asc { width: 121px; }
.results { width: 482px; height: 303px; margin-top: 3px; border: 1px solid #6b6b70; border-top-width: 2px; }
.list { height: 266px; border: 1px solid #828790; border-top: 0; padding: 1px 1px 0; overflow: hidden; }
.row { display: flex; align-items: center; height: 33.600px; border-bottom: 1px solid #555; }
.cloud { width: 24px; height: 16px; margin-left: 4px; }
.row p { margin: 0 0 0 7px; width: 221px; line-height: 12px; letter-spacing: -.22px; white-space: nowrap; padding-bottom: 1px; }
.row span { width: 190px; overflow: hidden; white-space: nowrap; letter-spacing: .04px; }
.row b { width: 30px; align-self: stretch; background: #d3d3d3; display: flex; align-items: center; justify-content: center; }
.row b svg { width: 14px; height: 14px; }
.pager { display: flex; align-items: center; height: 34px; padding-left: 149px; }
.prev, .next { width: 33px; height: 20px; }
.prev { color: #888; border-color: #d0d0d0; }
.pg { margin-left: 10px; width: 31px; letter-spacing: -.15px; }
.num { width: 41px; }
.tot { margin-left: 3px; width: 23px; }

.dock { margin-left: 1px; width: 21px; height: 617px; background: #fcfcfc; padding-top: 1px; }
.vtab { border: 1px solid #aaa; border-right: 0; border-radius: 4px 0 0 4px; display: flex; flex-direction: column; align-items: center; background: #f5f5f5; color: #777; padding-top: 3px; font: 11.4px "Liberation Sans", sans-serif; }
.v1 { height: 79px; }
.v2 { height: 87px; }
.vtab svg { width: 16px; height: 16px; margin-bottom: 3px; }
.vtab span { writing-mode: vertical-rl; white-space: nowrap; }

.status { flex: 1; display: flex; align-items: stretch; font: 11.4px/21px "Open Sans", sans-serif; letter-spacing: -.33px; color: #111; padding-left: 774px; }
.cell { border: 1px solid #f7f7f7; border-top: 0; }
.c1 { width: 127px; margin-right: 1px; }
.c2 { width: 18px; }
.c3 { width: 260px; padding-left: 5px; }
.status svg { width: 9px; height: 9px; margin: 9px 0 0 7px; }
```
